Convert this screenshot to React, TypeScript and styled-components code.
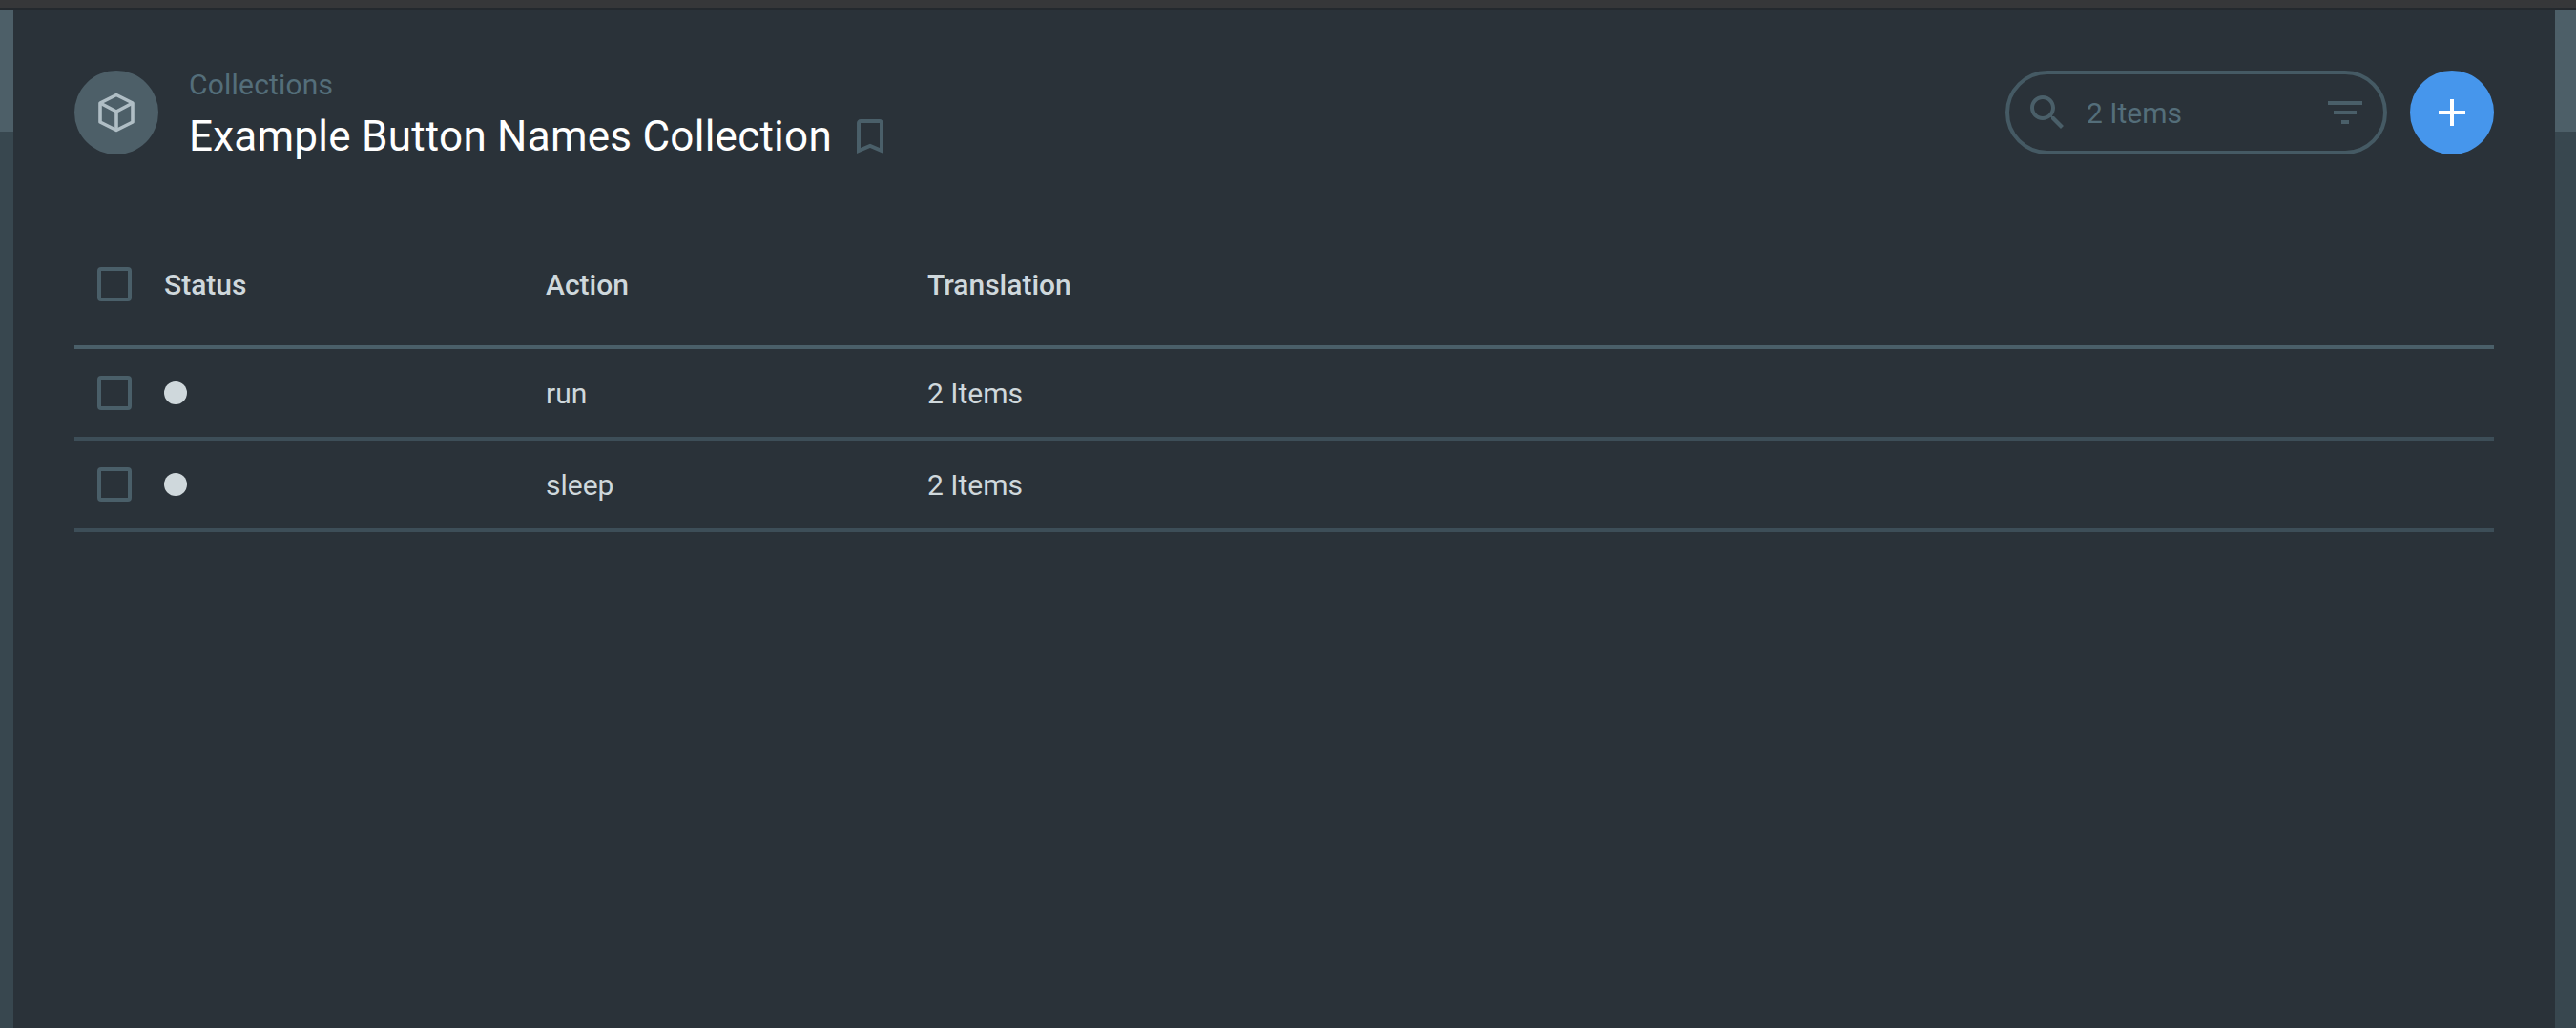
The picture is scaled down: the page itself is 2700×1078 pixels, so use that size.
import React from 'react'
import styled, { createGlobalStyle } from 'styled-components'

const GlobalStyle = createGlobalStyle`
  html, body {
    margin: 0;
    padding: 0;
    height: 100%;
    background: #2a3239;
    font-family: Roboto, "Noto Sans", sans-serif;
    overflow: hidden;
  }
`

const Frame = styled.div`
  display: flex;
  flex-direction: column;
  width: 2700px;
  height: 1078px;
`

const TopBar = styled.div`
  flex: none;
  height: 8px;
  background: #363739;
  border-bottom: 2px solid #24292e;
`

const Body = styled.div`
  flex: 1;
  display: flex;
  min-height: 0;
`

const Track = styled.div<{ width: number }>`
  flex: none;
  width: ${(props) => props.width}px;
  background: #38474f;
`

const Thumb = styled.div`
  height: 128px;
  background: #4d5f68;
`

const Main = styled.main`
  flex: 1;
  min-width: 0;
  padding: 64px 64px 0;
  background: #2a3239;
`

const Header = styled.header`
  display: flex;
  align-items: center;
  height: 88px;
  margin-bottom: 72px;
`

const RoundIcon = styled.div`
  flex: none;
  display: flex;
  align-items: center;
  justify-content: center;
  width: 88px;
  height: 88px;
  margin-right: 32px;
  border-radius: 50%;
  background: #4d5f68;
`

const Titles = styled.div`
  display: flex;
  flex-direction: column;
  height: 88px;
`

const Breadcrumb = styled.div`
  height: 30px;
  font-size: 30px;
  line-height: 30px;
  letter-spacing: 0.2px;
  color: #546e7a;
`

const TitleRow = styled.div`
  display: flex;
  align-items: center;
  height: 48px;
  margin-top: 15px;
`

const Title = styled.h1`
  margin: 0 16px 0 0;
  font-size: 44px;
  font-weight: 400;
  line-height: 48px;
  letter-spacing: 0.25px;
  color: #ffffff;
  white-space: nowrap;
`

const Actions = styled.div`
  display: flex;
  align-items: center;
  margin-left: auto;
`

const Search = styled.div`
  box-sizing: border-box;
  display: flex;
  align-items: center;
  width: 400px;
  height: 88px;
  margin-right: 24px;
  padding: 0 16px;
  border: 4px solid #455a64;
  border-radius: 44px;
`

const SearchText = styled.span`
  flex: 1;
  margin-left: 17px;
  font-size: 30px;
  color: #546e7a;
`

const AddButton = styled.div`
  display: flex;
  align-items: center;
  justify-content: center;
  width: 88px;
  height: 88px;
  border-radius: 50%;
  background: #4696ec;
`

const Row = styled.div<{ head?: boolean }>`
  display: grid;
  grid-template-columns: 70px 400px 400px 1fr;
  align-items: center;
  box-sizing: border-box;
  height: ${(props) => (props.head ? 132 : 96)}px;
  padding-left: 24px;
  border-bottom: 4px solid ${(props) => (props.head ? '#4a5f69' : '#3d4e58')};
  color: #cfd8dc;
  font-size: 30px;
  font-weight: ${(props) => (props.head ? 500 : 400)};
`

const Checkbox = styled.div`
  box-sizing: border-box;
  width: 36px;
  height: 36px;
  border: 4px solid #4a5f69;
  border-radius: 4px;
`

const StatusDot = styled.div`
  width: 24px;
  height: 24px;
  border-radius: 50%;
  background: #cfd8dc;
`

const Icon = styled.svg<{ color: string }>`
  flex: none;
  width: 48px;
  height: 48px;
  fill: ${(props) => props.color};
`

const CubeIcon = () => (
  <svg width="48" height="48" viewBox="0 0 48 48" fill="none" stroke="#b0bec5" strokeWidth="3.6" strokeLinejoin="round">
    <path d="M24 5.5 41 14v20l-17 8.5L7 34V14z" />
    <path d="M7 14l17 9 17-9M24 23v19.5" />
  </svg>
)

const rows = [
  { action: 'run', translation: '2 Items' },
  { action: 'sleep', translation: '2 Items' },
]

const App: React.FC = () => {
  return (
    <Frame>
      <GlobalStyle />
      <TopBar />
      <Body>
        <Track width={14}>
          <Thumb />
        </Track>
        <Main>
          <Header>
            <RoundIcon>
              <CubeIcon />
            </RoundIcon>
            <Titles>
              <Breadcrumb>Collections</Breadcrumb>
              <TitleRow>
                <Title>Example Button Names Collection</Title>
                <Icon color="#4a5f69" viewBox="0 0 24 24">
                  <path d="M17 3H7c-1.1 0-1.99.9-1.99 2L5 21l7-3 7 3V5c0-1.1-.9-2-2-2zm0 15l-5-2.18L7 18V5h10v13z" />
                </Icon>
              </TitleRow>
            </Titles>
            <Actions>
              <Search>
                <Icon color="#4a5f69" viewBox="0 0 24 24">
                  <path d="M15.5 14h-.79l-.28-.27C15.41 12.59 16 11.11 16 9.5 16 5.91 13.09 3 9.5 3S3 5.91 3 9.5 5.91 16 9.5 16c1.61 0 3.09-.59 4.23-1.57l.27.28v.79l5 4.99L20.49 19l-4.99-5zm-6 0C7.01 14 5 11.99 5 9.5S7.01 5 9.5 5 14 7.01 14 9.5 11.99 14 9.5 14z" />
                </Icon>
                <SearchText>2 Items</SearchText>
                <Icon color="#4a5f69" viewBox="0 0 24 24">
                  <path d="M10 18h4v-2h-4v2zM3 6v2h18V6H3zm3 7h12v-2H6v2z" />
                </Icon>
              </Search>
              <AddButton>
                <Icon color="#ffffff" viewBox="0 0 24 24">
                  <path d="M19 13h-6v6h-2v-6H5v-2h6V5h2v6h6v2z" />
                </Icon>
              </AddButton>
            </Actions>
          </Header>
          <Row head>
            <Checkbox />
            <span>Status</span>
            <span>Action</span>
            <span>Translation</span>
          </Row>
          {rows.map((row) => (
            <Row key={row.action}>
              <Checkbox />
              <StatusDot />
              <span>{row.action}</span>
              <span>{row.translation}</span>
            </Row>
          ))}
        </Main>
        <Track width={22}>
          <Thumb />
        </Track>
      </Body>
    </Frame>
  )
}

export default App
